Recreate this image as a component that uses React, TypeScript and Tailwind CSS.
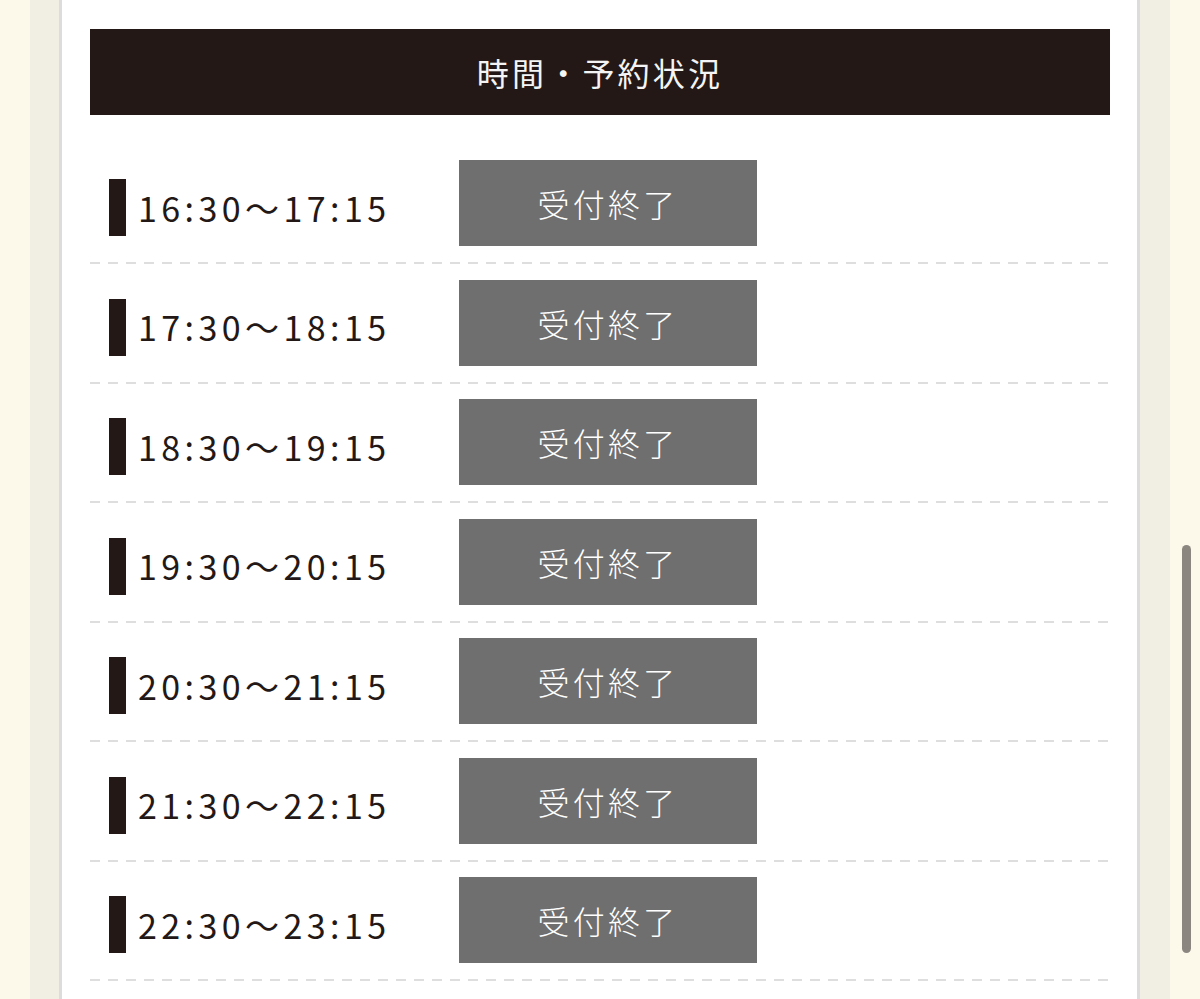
import React from "react";

const times = [
  "16:30〜17:15",
  "17:30〜18:15",
  "18:30〜19:15",
  "19:30〜20:15",
  "20:30〜21:15",
  "21:30〜22:15",
  "22:30〜23:15",
];

export default function App() {
  return (
    <div
      className="relative flex h-[999px] w-[1200px] overflow-hidden bg-[#fdf9ea]"
      style={{ fontFamily: '"Noto Sans CJK JP", "Noto Sans", sans-serif' }}
    >
      <div className="w-[30px] shrink-0 bg-[#fdf9ea]" />
      <div className="w-[29px] shrink-0 bg-[#f1eee3]" />
      <div className="w-[1081px] shrink-0 border-x-[3px] border-[#dcdcdc] bg-white pl-[28px] pr-[27px] pt-[29px]">
        <div className="flex h-[86px] items-center justify-center bg-[#231815] text-[32px] tracking-[0.1em] text-[#f4f4f4]">
          時間・予約状況
        </div>
        <div className="pt-[45px]">
          {times.map((t, i) => (
            <div key={t}>
              <div className={`flex items-center ${i === 0 ? "" : "pt-[15.5px]"} pb-[16px]`}>
                <div className="flex w-[369px] items-center pl-[19px] pt-[9px]">
                  <div className="h-[57px] w-[17px] bg-[#231815]" />
                  <span className="ml-[12px] text-[34px] leading-none tracking-[0.13em] text-[#231815]">
                    {t}
                  </span>
                </div>
                <div className="flex h-[86px] w-[298px] items-center justify-center bg-[#6f6f6f] text-[32px] font-light tracking-[0.1em] text-white">
                  受付終了
                </div>
              </div>
              <div className="h-[2px] w-full bg-[repeating-linear-gradient(90deg,#dedede_0px,#dedede_10px,transparent_10px,transparent_18px)]" />
            </div>
          ))}
        </div>
      </div>
      <div className="w-[30px] shrink-0 bg-[#f1eee3]" />
      <div className="w-[30px] shrink-0 bg-[#fdf9ea]" />
      <div className="absolute left-[1182px] top-[545px] h-[408px] w-[9px] rounded-full bg-[#8b8780]" />
    </div>
  );
}
